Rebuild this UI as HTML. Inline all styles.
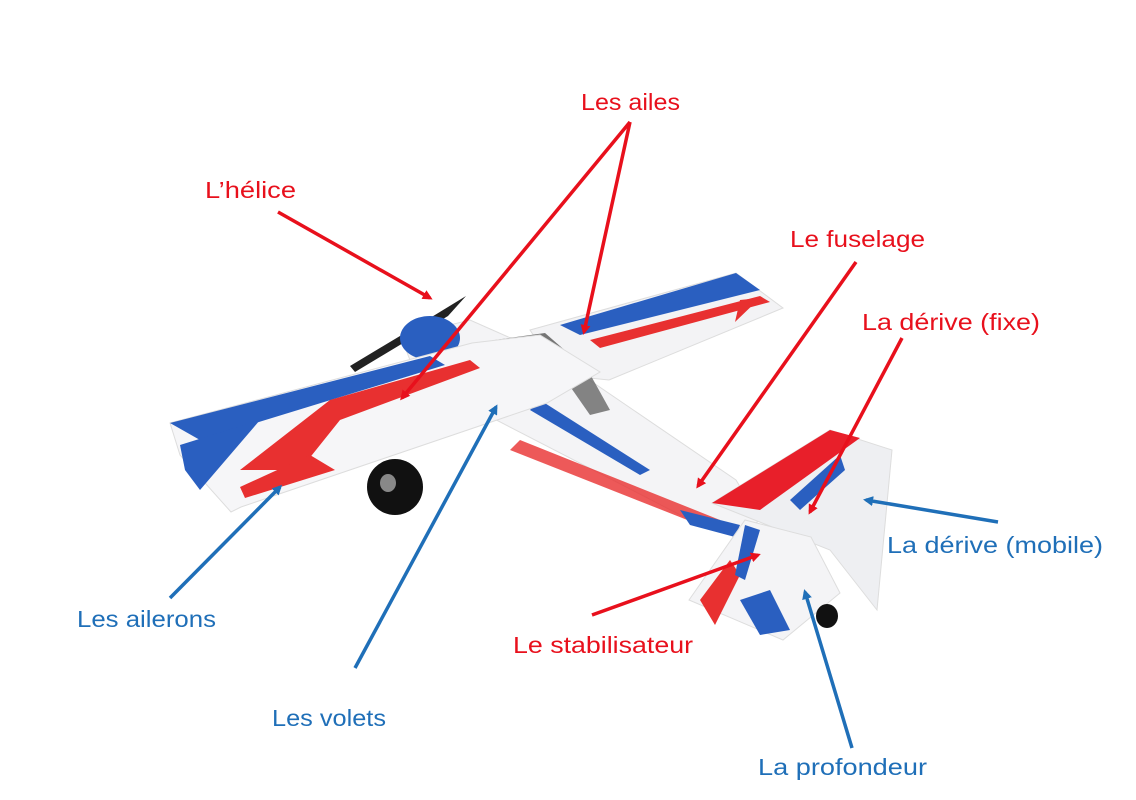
<!DOCTYPE html>
<html><head><meta charset="utf-8"><style>
html,body{margin:0;padding:0;background:#fff;}
svg{display:block;}
text{font-family:"Liberation Sans",sans-serif;font-size:23px;}
.r{fill:#e8101c;} .b{fill:#1f6fb8;}
</style></head><body>
<svg width="1136" height="800" viewBox="0 0 1136 800" xmlns="http://www.w3.org/2000/svg">
<defs>
<marker id="ar" markerWidth="10" markerHeight="10" refX="7" refY="5" orient="auto" markerUnits="userSpaceOnUse"><path d="M0,0 L10,5 L0,10 Z" fill="#e8101c"/></marker>
<marker id="ab" markerWidth="10" markerHeight="10" refX="7" refY="5" orient="auto" markerUnits="userSpaceOnUse"><path d="M0,0 L10,5 L0,10 Z" fill="#1f6fb8"/></marker>
</defs>
<!-- propeller -->
<path d="M466,296 L448,316 L355,372 L350,366 L430,318 Z" fill="#222"/>
<!-- right wing (behind) -->
<polygon points="530,330 736,273 783,308 609,380 560,375" fill="#f3f3f5" stroke="#ddd"/>
<polygon points="560,325 736,273 760,290 580,335" fill="#2a5fc0"/>
<polygon points="590,340 760,296 770,302 600,348" fill="#e83030"/>
<polygon points="740,300 760,298 735,322" fill="#e83030"/>
<!-- fuselage -->
<polygon points="401,337 470,320 560,360 736,480 760,520 736,537 690,520 477,410 410,360" fill="#f4f4f6" stroke="#ddd"/>
<polygon points="540,400 650,470 640,475 530,410" fill="#2a5fc0"/>
<polygon points="520,440 720,520 700,525 510,450" fill="#e83030" opacity="0.8"/>
<polygon points="680,510 740,525 735,537 690,525" fill="#2a5fc0"/>
<!-- cowl -->
<ellipse cx="430" cy="338" rx="30" ry="22" fill="#2a5fc0"/>
<!-- canopy -->
<polygon points="495,340 545,333 576,360 555,372 505,360" fill="#555" opacity="0.8"/>
<polygon points="560,372 585,365 610,410 590,415" fill="#666" opacity="0.8"/>
<!-- left wing -->
<polygon points="170,423 472,343 540,335 600,372 547,403 241,507 231,512 180,455" fill="#f6f6f8" stroke="#ddd"/>
<polygon points="170,423 430,356 445,365 200,440" fill="#2a5fc0"/>
<polygon points="180,445 260,420 200,490 185,470" fill="#2a5fc0"/>
<polygon points="240,470 330,400 470,360 480,368 340,420 300,470" fill="#e83030"/>
<polygon points="240,487 310,455 335,470 245,498" fill="#e83030"/>
<!-- wheel -->
<ellipse cx="395" cy="487" rx="28" ry="28" fill="#111"/>
<ellipse cx="388" cy="483" rx="8" ry="9" fill="#888"/>
<!-- tail fin -->
<polygon points="712,503 830,430 892,450 877,610 830,550" fill="#eeeff2" stroke="#ddd"/>
<polygon points="712,503 830,430 860,438 760,510" fill="#e81f2a"/>
<polygon points="790,500 840,455 845,470 800,510" fill="#2a5fc0"/>
<!-- stabilizer -->
<polygon points="689,600 745,520 811,537 840,593 783,640" fill="#f4f4f6" stroke="#ddd"/>
<polygon points="700,600 730,560 740,575 715,625" fill="#e83030"/>
<polygon points="745,525 760,530 745,580 735,575" fill="#2a5fc0"/>
<polygon points="740,600 770,590 790,630 760,635" fill="#2a5fc0"/>
<ellipse cx="827" cy="616" rx="11" ry="12" fill="#111"/>
<!-- arrows red -->
<g stroke="#e8101c" stroke-width="3.5" fill="none">
<line x1="630" y1="122" x2="402" y2="398" marker-end="url(#ar)"/>
<line x1="630" y1="122" x2="584" y2="332" marker-end="url(#ar)"/>
<line x1="278" y1="212" x2="430" y2="298" marker-end="url(#ar)"/>
<line x1="856" y1="262" x2="698" y2="486" marker-end="url(#ar)"/>
<line x1="902" y1="338" x2="810" y2="512" marker-end="url(#ar)"/>
<line x1="592" y1="615" x2="758" y2="555" marker-end="url(#ar)"/>
</g>
<g stroke="#1f6fb8" stroke-width="3.5" fill="none">
<line x1="998" y1="522" x2="866" y2="500" marker-end="url(#ab)"/>
<line x1="170" y1="598" x2="280" y2="487" marker-end="url(#ab)"/>
<line x1="355" y1="668" x2="496" y2="407" marker-end="url(#ab)"/>
<line x1="852" y1="748" x2="805" y2="592" marker-end="url(#ab)"/>
</g>
<text class="r" x="581" y="110" textLength="99" lengthAdjust="spacingAndGlyphs">Les ailes</text>
<text class="r" x="205" y="198" textLength="91" lengthAdjust="spacingAndGlyphs">L’hélice</text>
<text class="r" x="790" y="247" textLength="135" lengthAdjust="spacingAndGlyphs">Le fuselage</text>
<text class="r" x="862" y="330" textLength="178" lengthAdjust="spacingAndGlyphs">La dérive (fixe)</text>
<text class="b" x="887" y="553" textLength="216" lengthAdjust="spacingAndGlyphs">La dérive (mobile)</text>
<text class="b" x="77" y="627" textLength="139" lengthAdjust="spacingAndGlyphs">Les ailerons</text>
<text class="r" x="513" y="653" textLength="180" lengthAdjust="spacingAndGlyphs">Le stabilisateur</text>
<text class="b" x="272" y="726" textLength="114" lengthAdjust="spacingAndGlyphs">Les volets</text>
<text class="b" x="758" y="775" textLength="169" lengthAdjust="spacingAndGlyphs">La profondeur</text>
</svg>
</body></html>
